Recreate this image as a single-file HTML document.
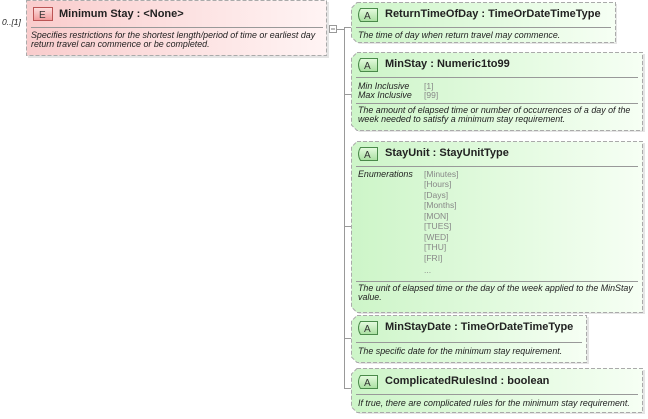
<!DOCTYPE html>
<html><head><meta charset="utf-8"><style>
html,body{margin:0;padding:0;background:#fff;width:648px;height:419px;overflow:hidden}
svg text{font-family:"Liberation Sans",sans-serif}
.t{font-size:11px;font-weight:bold;fill:#222}
.d{font-size:8.9px;font-style:italic;fill:#222}
.e{font-size:8.5px;fill:#888}
</style></head><body>
<svg width="648" height="419" xmlns="http://www.w3.org/2000/svg">
<defs>
<linearGradient id="g" x1="0" x2="1" y1="0" y2="0"><stop offset="0" stop-color="#cdf5c8"/><stop offset="1" stop-color="#f6fff4"/></linearGradient>
<linearGradient id="p" x1="0" x2="1" y1="0" y2="0"><stop offset="0" stop-color="#f9cccc"/><stop offset="1" stop-color="#fff4f4"/></linearGradient>
<linearGradient id="bg" x1="0" x2="0" y1="0" y2="1"><stop offset="0" stop-color="#e6fbe0"/><stop offset="1" stop-color="#a9e0a0"/></linearGradient>
<linearGradient id="bp" x1="0" x2="0" y1="0" y2="1"><stop offset="0" stop-color="#fde0e0"/><stop offset="1" stop-color="#f19a9a"/></linearGradient>
</defs>
<g stroke="#999" stroke-width="1" fill="none">
<line x1="337" y1="29.5" x2="344.5" y2="29.5"/>
<line x1="344.5" y1="27" x2="344.5" y2="389"/>
<line x1="344.5" y1="27.5" x2="351" y2="27.5"/>
<line x1="344.5" y1="94.5" x2="351" y2="94.5"/>
<line x1="344.5" y1="226.5" x2="351" y2="226.5"/>
<line x1="344.5" y1="338.5" x2="351" y2="338.5"/>
<line x1="344.5" y1="388.5" x2="351" y2="388.5"/>
</g>
<text x="2" y="25" class="d" style="font-size:8.5px">0..[1]</text>
<rect x="28" y="2" width="301" height="56" fill="#e4e4e4"/>
<rect x="26.5" y="0.5" width="300" height="55" fill="url(#p)" stroke="#aaa" stroke-dasharray="4,2"/>
<rect x="33.5" y="7.5" width="19" height="13" fill="url(#bp)" stroke="#b55"/>
<text x="39" y="18" style="font-size:10px;fill:#333">E</text>
<text x="59" y="17" class="t">Minimum Stay  : &lt;None&gt;</text>
<line x1="31" y1="27.5" x2="323" y2="27.5" stroke="#999"/>
<text x="31" y="38" class="d">Specifies restrictions for the shortest length/period of time or earliest day</text>
<text x="31" y="47" class="d">return travel can commence or be completed.</text>
<rect x="329.5" y="25.5" width="7" height="7" fill="#fff" stroke="#999"/>
<line x1="331" y1="29" x2="335" y2="29" stroke="#777"/>
<g>
<polygon points="359,4 617,4 617,44 359,44 353,38 353,10" fill="#e4e4e4"/>
<polygon points="357,2.5 615.5,2.5 615.5,42.5 357,42.5 351.5,37 351.5,8" fill="url(#g)" stroke="#aaa" stroke-dasharray="4,2"/>
<polygon points="359,54 645,54 645,132 359,132 353,126 353,60" fill="#e4e4e4"/>
<polygon points="357,52.5 642.5,52.5 642.5,130.5 357,130.5 351.5,125 351.5,58" fill="url(#g)" stroke="#aaa" stroke-dasharray="4,2"/>
<polygon points="359,143 645,143 645,314 359,314 353,308 353,149" fill="#e4e4e4"/>
<polygon points="357,141.5 642.5,141.5 642.5,312.5 357,312.5 351.5,307 351.5,147" fill="url(#g)" stroke="#aaa" stroke-dasharray="4,2"/>
<polygon points="359,317 589,317 589,364 359,364 353,358 353,323" fill="#e4e4e4"/>
<polygon points="357,315.5 586.5,315.5 586.5,362.5 357,362.5 351.5,357 351.5,321" fill="url(#g)" stroke="#aaa" stroke-dasharray="4,2"/>
<polygon points="359,370 645,370 645,414 359,414 353,408 353,376" fill="#e4e4e4"/>
<polygon points="357,368.5 642.5,368.5 642.5,412.5 357,412.5 351.5,407 351.5,374" fill="url(#g)" stroke="#aaa" stroke-dasharray="4,2"/>
</g>
<g>
<g><path d="M360.5,8.5 H377.5 V21.5 H360.5 Q356.5,15 360.5,8.5Z" fill="url(#bg)" stroke="#4a8a4a"/><text x="364" y="19" style="font-size:10px;fill:#333">A</text></g>
<g transform="translate(0,50)"><path d="M360.5,8.5 H377.5 V21.5 H360.5 Q356.5,15 360.5,8.5Z" fill="url(#bg)" stroke="#4a8a4a"/><text x="364" y="19" style="font-size:10px;fill:#333">A</text></g>
<g transform="translate(0,139)"><path d="M360.5,8.5 H377.5 V21.5 H360.5 Q356.5,15 360.5,8.5Z" fill="url(#bg)" stroke="#4a8a4a"/><text x="364" y="19" style="font-size:10px;fill:#333">A</text></g>
<g transform="translate(0,313)"><path d="M360.5,8.5 H377.5 V21.5 H360.5 Q356.5,15 360.5,8.5Z" fill="url(#bg)" stroke="#4a8a4a"/><text x="364" y="19" style="font-size:10px;fill:#333">A</text></g>
<g transform="translate(0,367)"><path d="M360.5,8.5 H377.5 V21.5 H360.5 Q356.5,15 360.5,8.5Z" fill="url(#bg)" stroke="#4a8a4a"/><text x="364" y="19" style="font-size:10px;fill:#333">A</text></g>
</g>
<g stroke="#999">
<line x1="356" y1="27.5" x2="611" y2="27.5"/>
<line x1="356" y1="77.5" x2="638" y2="77.5"/>
<line x1="356" y1="103.5" x2="638" y2="103.5"/>
<line x1="356" y1="166.5" x2="638" y2="166.5"/>
<line x1="356" y1="281.5" x2="638" y2="281.5"/>
<line x1="356" y1="342.5" x2="582" y2="342.5"/>
<line x1="356" y1="394.5" x2="638" y2="394.5"/>
</g>
<text x="385" y="17" class="t">ReturnTimeOfDay  : TimeOrDateTimeType</text>
<text x="358" y="38" class="d">The time of day when return travel may commence.</text>
<text x="385" y="67" class="t">MinStay   : Numeric1to99</text>
<text x="358" y="89" class="d">Min Inclusive</text><text x="424" y="89" class="e">[1]</text>
<text x="358" y="98" class="d">Max Inclusive</text><text x="424" y="98" class="e">[99]</text>
<text x="358" y="113" class="d">The amount of elapsed time or number of occurrences of a day of the</text>
<text x="358" y="122" class="d">week needed to satisfy a minimum stay requirement.</text>
<text x="385" y="156" class="t">StayUnit  : StayUnitType</text>
<text x="358" y="177" class="d">Enumerations</text>
<text x="424" y="177" class="e">[Minutes]</text><text x="424" y="187" class="e">[Hours]</text><text x="424" y="198" class="e">[Days]</text><text x="424" y="208" class="e">[Months]</text><text x="424" y="219" class="e">[MON]</text><text x="424" y="229" class="e">[TUES]</text><text x="424" y="240" class="e">[WED]</text><text x="424" y="250" class="e">[THU]</text><text x="424" y="261" class="e">[FRI]</text><text x="424" y="273" class="e">...</text>
<text x="358" y="291" class="d">The unit of elapsed time or the day of the week applied to the MinStay</text>
<text x="358" y="300" class="d">value.</text>
<text x="385" y="330" class="t">MinStayDate  : TimeOrDateTimeType</text>
<text x="358" y="354" class="d">The specific date for the minimum stay requirement.</text>
<text x="385" y="384" class="t">ComplicatedRulesInd  : boolean</text>
<text x="358" y="406" class="d">If true, there are complicated rules for the minimum stay requirement.</text>
</svg>
</body></html>
